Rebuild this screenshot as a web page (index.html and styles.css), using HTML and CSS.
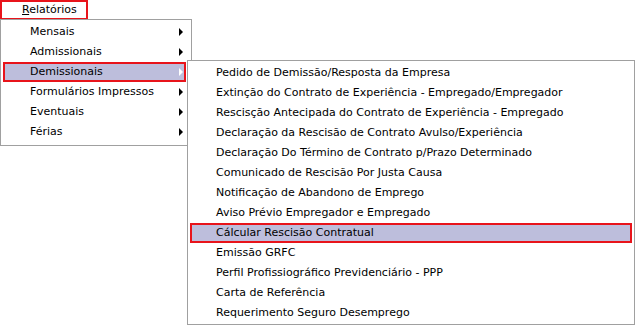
FILE: index.html
```html
<!DOCTYPE html>
<html lang="pt">
<head>
    <meta charset="UTF-8">
    <title>Relatórios</title>
    <link rel="stylesheet" href="styles.css">
</head>
<body>
    <div class="menubar">
        <div class="menu-title marked"><u>R</u>elatórios</div>
    </div>
    <div class="menu main-menu">
        <div class="item">Mensais<span class="arrow"></span></div>
        <div class="item">Admissionais<span class="arrow"></span></div>
        <div class="item active marked">Demissionais<span class="arrow"></span></div>
        <div class="item">Formulários Impressos<span class="arrow"></span></div>
        <div class="item">Eventuais<span class="arrow"></span></div>
        <div class="item">Férias<span class="arrow"></span></div>
    </div>
    <div class="menu sub-menu">
        <div class="item">Pedido de Demissão/Resposta da Empresa</div>
        <div class="item">Extinção do Contrato de Experiência - Empregado/Empregador</div>
        <div class="item">Rescisção Antecipada do Contrato de Experiência - Empregado</div>
        <div class="item">Declaração da Rescisão de Contrato Avulso/Experiência</div>
        <div class="item">Declaração Do Término de Contrato p/Prazo Determinado</div>
        <div class="item">Comunicado de Rescisão Por Justa Causa</div>
        <div class="item">Notificação de Abandono de Emprego</div>
        <div class="item">Aviso Prévio Empregador e Empregado</div>
        <div class="item active marked">Cálcular Rescisão Contratual</div>
        <div class="item">Emissão GRFC</div>
        <div class="item">Perfil Profissiográfico Previdenciário - PPP</div>
        <div class="item">Carta de Referência</div>
        <div class="item">Requerimento Seguro Desemprego</div>
    </div>
</body>
</html>
```
FILE: styles.css
```css
body {
    margin: 0;
    background-color: #fff;
    color: #000;
    font-family: Tahoma, "DejaVu Sans", sans-serif;
    font-size: 11px;
    width: 635px;
    height: 325px;
    position: relative;
    overflow: hidden;
}
.menubar {
    height: 19px;
    display: flex;
}
.menu-title {
    width: 88px;
    height: 20px;
    box-sizing: border-box;
    padding-left: 22px;
    line-height: 20px;
}
.marked {
    outline: 2px solid #e8141b;
    outline-offset: -2px;
}
.menu {
    position: absolute;
    background-color: #fff;
    border: 1px solid #a0a0a0;
    box-sizing: border-box;
}
.main-menu {
    left: 0;
    top: 19px;
    width: 192px;
    height: 127px;
    padding: 2px 5px 2px 2px;
}
.sub-menu {
    left: 187px;
    top: 60px;
    width: 448px;
    height: 265px;
    padding: 2px 2px 2px 2px;
}
.item {
    height: 20px;
    line-height: 20px;
    padding-left: 27px;
    position: relative;
    white-space: nowrap;
}
.sub-menu .item {
    padding-left: 26px;
}
.item.active {
    background-color: #bdbedc;
}
.arrow {
    position: absolute;
    right: 3px;
    top: 6px;
    width: 0;
    height: 0;
    border-top: 4px solid transparent;
    border-bottom: 4px solid transparent;
    border-left: 4px solid #000;
}
.item.active .arrow {
    border-left-color: #fff;
}
```
